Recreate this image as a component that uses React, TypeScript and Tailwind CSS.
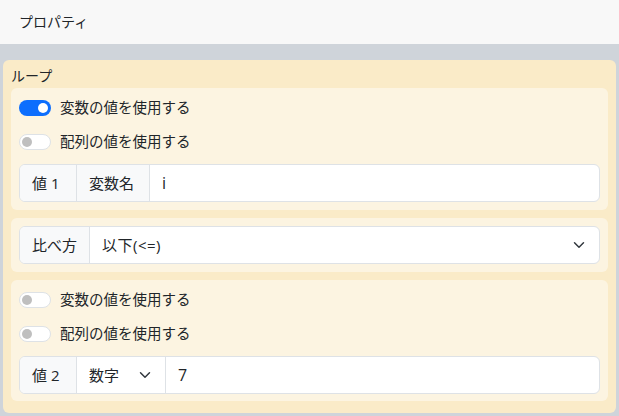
import React from "react"

const Chevron = () => (
  <svg width="16" height="12" viewBox="0 0 16 16" fill="none" className="shrink-0">
    <path d="m2 5 6 6 6-6" stroke="#343a40" strokeWidth="2" strokeLinecap="round" strokeLinejoin="round" />
  </svg>
)

function Switch({ on, label }: { on: boolean; label: string }) {
  return (
    <div className="flex h-6 items-center gap-[9px]">
      {on ? (
        <span className="flex h-4 w-8 items-center justify-end rounded-full bg-[#0d6efd] px-[3px]">
          <span className="h-[10px] w-[10px] rounded-full bg-white" />
        </span>
      ) : (
        <span className="flex h-4 w-8 items-center justify-start rounded-full border border-[#dee2e6] bg-white px-[2px]">
          <span className="h-[10px] w-[10px] rounded-full bg-[#bfbfbf]" />
        </span>
      )}
      <span className="text-[14.5px]">{label}</span>
    </div>
  )
}

function Addon({ w, children }: { w: string; children: React.ReactNode }) {
  return (
    <span className={`flex items-center border-r border-[#dee2e6] bg-[#f8f9fa] px-3 ${w}`}>{children}</span>
  )
}

export default function App() {
  return (
    <div className="flex h-[416px] w-[619px] flex-col bg-[#cfd4da] font-['Open_Sans','Noto_Sans_CJK_JP',sans-serif] text-[15px] text-[#212529]">
      <div className="flex h-[44px] shrink-0 items-center bg-[#f8f8f8] px-[19px] pb-[2px] text-[14px]">プロパティ</div>

      <div className="px-[3px] pt-4 pb-[3px]">
        <div className="rounded-md bg-[#faebc8] px-2 pt-1 pb-3">
          <div className="h-6 text-[14px] leading-6">ループ</div>

          <div className="flex flex-col gap-2">
            {/* 値1 */}
            <div className="flex flex-col gap-[10px] rounded-md bg-[#fcf4e1] p-2">
              <Switch on label="変数の値を使用する" />
              <Switch on={false} label="配列の値を使用する" />
              <div className="flex h-[38px] overflow-hidden rounded-md border border-[#dee2e6] bg-white">
                <Addon w="w-[57px]">値 1</Addon>
                <Addon w="w-[73px]">変数名</Addon>
                <span className="flex flex-1 items-center px-3 text-[16px]">i</span>
              </div>
            </div>

            {/* 比べ方 */}
            <div className="rounded-md bg-[#fcf4e1] p-2">
              <div className="flex h-[38px] overflow-hidden rounded-md border border-[#dee2e6] bg-white">
                <Addon w="w-[70px]">比べ方</Addon>
                <span className="flex flex-1 items-center justify-between px-3">
                  <span className="tracking-[0.5px]">以下(&lt;=)</span>
                  <Chevron />
                </span>
              </div>
            </div>

            {/* 値2 */}
            <div className="flex flex-col gap-[10px] rounded-md bg-[#fcf4e1] px-2 pt-2 pb-[7px]">
              <Switch on={false} label="変数の値を使用する" />
              <Switch on={false} label="配列の値を使用する" />
              <div className="flex h-[38px] overflow-hidden rounded-md border border-[#dee2e6] bg-white">
                <Addon w="w-[57px]">値 2</Addon>
                <span className="flex w-[89px] items-center justify-between border-r border-[#dee2e6] px-3">
                  数字
                  <Chevron />
                </span>
                <span className="flex flex-1 items-center px-3 text-[16px]">7</span>
              </div>
            </div>
          </div>
        </div>
      </div>
    </div>
  )
}
